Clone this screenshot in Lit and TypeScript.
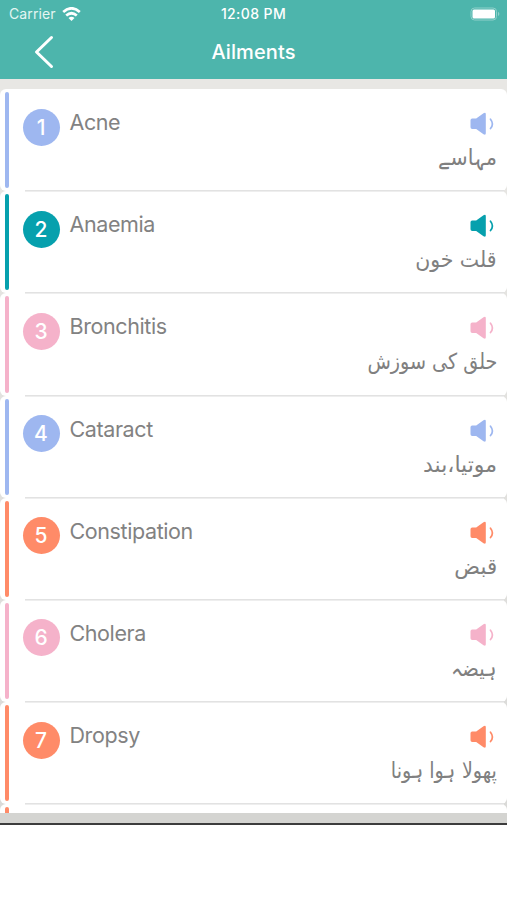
import { LitElement, html, css } from 'lit';

interface Ailment { name: string; urdu: string; color: string; condense: number; }

const BLUE = '#9eb7f0';
const TEAL = '#06a0ad';
const PINK = '#f5b2ca';
const ORANGE = '#ff8b68';

const AILMENTS: Ailment[] = [
  { name: 'Acne', urdu: 'مہاسے', color: BLUE, condense: 0.93 },
  { name: 'Anaemia', urdu: 'قلت خون', color: TEAL, condense: 0.93 },
  { name: 'Bronchitis', urdu: 'حلق کی سوزش', color: PINK, condense: 0.87 },
  { name: 'Cataract', urdu: 'موتیا،بند', color: BLUE, condense: 1 },
  { name: 'Constipation', urdu: 'قبض', color: ORANGE, condense: 0.97 },
  { name: 'Cholera', urdu: 'ہیضہ', color: PINK, condense: 0.89 },
  { name: 'Dropsy', urdu: 'پھولا ہوا ہونا', color: ORANGE, condense: 0.87 },
];

class AilmentRow extends LitElement {
  static properties = { item: { attribute: false }, index: { type: Number } };
  declare item: Ailment;
  declare index: number;

  static styles = css`
    :host { display: block; height: 102.2px; flex: none; }
    .card { box-sizing: border-box; height: 100%; display: flex; background: #fff; border-radius: 6px; padding: 3px 10px 3px 5px; position: relative; }
    .card::after { content: ''; position: absolute; left: 25px; right: 3px; bottom: -1px; height: 2px; background: linear-gradient(#e2e2e2 50%, #eeeeee 50%); z-index: 1; }
    .bar { width: 4px; border-radius: 2px; flex: none; }
    .badge { width: 37px; height: 37px; border-radius: 50%; margin: 16.5px 0 0 13.5px; flex: none; color: #fff; font: 500 21px/37px Inter, sans-serif; text-align: center; }
    .name { margin: 16px 0 0 10px; font: 400 21.5px/28px Inter, sans-serif; letter-spacing: -0.4px; color: #828282; flex: 1; }
    .end { display: flex; flex-direction: column; align-items: flex-end; padding-top: 20px; }
    svg { display: block; margin-right: 2px; }
    .urdu { direction: rtl; font: 22px/28px "DejaVu Sans", sans-serif; color: #808080; white-space: nowrap; margin-top: 8px; transform-origin: right; }
  `;

  render() {
    const { item } = this;
    return html`
      <div class="card">
        <div class="bar" style="background:${item.color}"></div>
        <div class="badge" style="background:${item.color}">${this.index}</div>
        <div class="name">${item.name}</div>
        <div class="end">
          <svg width="26" height="24" viewBox="0 0 26 24" style="color:${item.color}">
            <path d="M3.200 6.500H7.200L14.500 1.300Q16.800 0 16.800 2.200V21.300Q16.800 23.500 14.500 22.200L7.200 17H3.200Q1.500 17 1.500 15.300V8.200Q1.500 6.500 3.200 6.500Z" fill="currentColor"/>
            <path d="M21.500 7.200Q25.300 12 21.500 16.500" fill="none" stroke="currentColor" stroke-width="1.700" stroke-linecap="round"/>
          </svg>
          <div class="urdu" style="transform:scaleX(${item.condense})">${item.urdu}</div>
        </div>
      </div>`;
  }
}
customElements.define('ailment-row', AilmentRow);

class AppRoot extends LitElement {
  static styles = css`
    :host { display: flex; flex-direction: column; height: 900px; background: #fff; overflow: hidden; font-family: Inter, sans-serif; }
    header { height: 79px; background: #4db5ac; color: #fff; flex: none; }
    .status, .nav { display: grid; grid-template-columns: 1fr auto 1fr; align-items: center; }
    .status { height: 27px; padding: 0 6px; }
    .carrier { display: flex; align-items: center; gap: 6px; font-size: 14px; letter-spacing: 0.1px; color: #e4f5f2; margin-left: 3px; }
    .time { font-size: 14px; font-weight: 500; letter-spacing: 0.4px; }
    .battery { justify-self: end; }
    .nav { height: 50px; padding: 0 33px; }
    .title { font-size: 20px; font-weight: 500; letter-spacing: 0.1px; }
    svg { display: block; }
    .list { box-sizing: border-box; height: 734px; padding-top: 10px; background: linear-gradient(#e8e7e4 0 20px, #dadad8 100%); overflow: hidden; flex: none; }
    .foot { height: 10px; background: #d4d4d1; border-bottom: 2px solid #3c3c3c; flex: none; }
    .rows { height: 724px; overflow: hidden; display: flex; flex-direction: column; }
  `;

  render() {
    return html`
      <header>
        <div class="status">
          <div class="carrier">Carrier
            <svg width="19" height="14" viewBox="0 0 19 14" fill="none" stroke="#fff" stroke-width="2.700">
              <path d="M1.200 4.900Q9.500-2.300 17.800 4.900M4.200 8.500Q9.500 4 14.800 8.500"/>
              <path d="M6.500 11Q9.500 8.500 12.500 11L9.500 14Z" fill="#fff" stroke="none"/>
            </svg>
          </div>
          <div class="time">12:08 PM</div>
          <svg class="battery" width="31" height="14" viewBox="0 0 31 14">
            <rect x="1" y="1" width="25.500" height="12" rx="3.500" fill="none" stroke="#8fd0ca" stroke-width="1"/>
            <rect x="2.500" y="2.500" width="22.500" height="9" rx="1.500" fill="#fff"/>
            <path d="M28 4.800Q30.800 7 28 9.200Z" fill="#8fd0ca"/>
          </svg>
        </div>
        <div class="nav">
          <svg width="22" height="34" viewBox="0 0 22 34" fill="none" stroke="#fff" stroke-width="3" stroke-linecap="round" stroke-linejoin="round">
            <path d="M18.500 2.500L3.500 17L18.500 31.500"/>
          </svg>
          <div class="title">Ailments</div>
        </div>
      </header>
      <main class="list">
        <div class="rows">
          ${AILMENTS.map((item, i) => html`<ailment-row .item=${item} .index=${i + 1}></ailment-row>`)}
          <ailment-row .item=${{ name: '', urdu: '', color: ORANGE, condense: 1 }}></ailment-row>
        </div>
      </main>
      <div class="foot"></div>
    `;
  }
}
customElements.define('app-root', AppRoot);
